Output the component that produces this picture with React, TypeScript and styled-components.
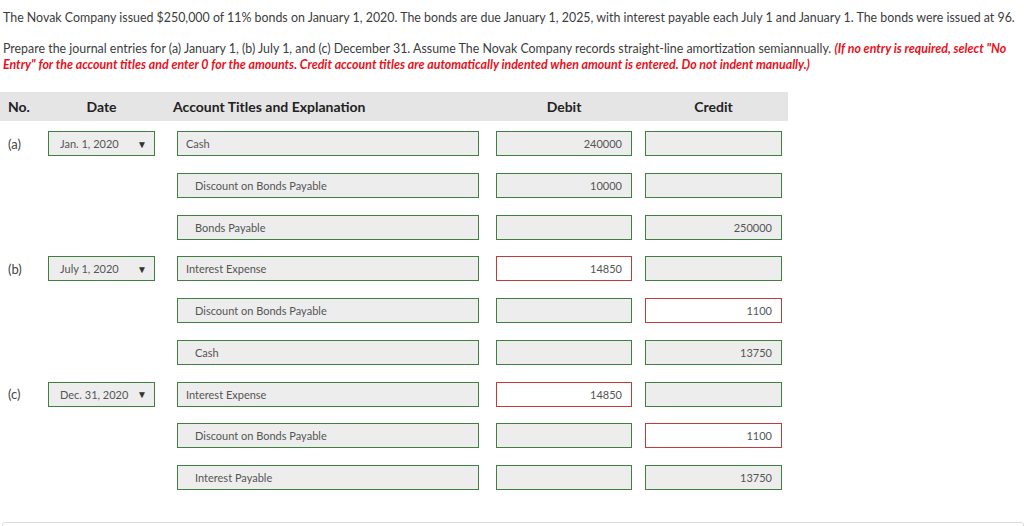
import styled, { createGlobalStyle } from 'styled-components';

const Global = createGlobalStyle`
  body {
    margin: 0;
    background: #fff;
    font-family: Lato, 'Open Sans', sans-serif;
    color: #3a3a3a;
  }
`;

const Page = styled.div`
  width: 1024px;
  height: 526px;
  overflow: hidden;
  padding-top: 10px;
  box-sizing: border-box;
`;

const Texto = styled.p`
  margin: 0 0 15px 3px;
  font-size: 12.4px;
  line-height: 16px;
  color: #3c3c3c;

  em {
    color: #e8111b;
    font-weight: bold;
    font-style: italic;
  }
`;

const Tabela = styled.div`
  width: 788px;
  margin-top: 19px;
`;

const Cabecalho = styled.div`
  display: grid;
  grid-template-columns: 48px 129px 319px 149px 143px;
  height: 29px;
  align-items: center;
  background: #e5e5e5;
  font-size: 14px;
  font-weight: bold;
  color: #222;
`;

const Celula = styled.div<{ $alinhar?: string; $largura?: number; $recuo?: number }>`
  text-align: ${p => p.$alinhar || 'left'};
  width: ${p => (p.$largura ? p.$largura + 'px' : 'auto')};
  padding-left: ${p => (p.$recuo && p.$recuo > 0 ? p.$recuo : 0)}px;
  margin-left: ${p => (p.$recuo && p.$recuo < 0 ? p.$recuo : 0)}px;
  white-space: nowrap;
`;

const Corpo = styled.div`
  display: grid;
  grid-template-columns: 48px 129px 319px 149px 143px;
  grid-auto-rows: 25px;
  row-gap: 16.75px;
  padding-top: 10px;
  align-items: center;
`;

const Letra = styled.div`
  font-size: 13px;
  color: #444;
  padding-left: 8px;
`;

const Vazio = styled.div``;

const Selecao = styled.div`
  width: 107px;
  height: 25px;
  box-sizing: border-box;
  border: 1px solid #3f7f3f;
  background: #ededed;
  display: flex;
  align-items: center;
  justify-content: space-between;
  padding: 0 7px 0 11px;
  font-size: 11px;
  color: #555;

  span.seta {
    font-size: 10px;
    color: #333;
  }
`;

const Campo = styled.div<{ $largura: number; $erro?: boolean; $recuado?: boolean; $numero?: boolean }>`
  width: ${p => p.$largura}px;
  height: 25px;
  box-sizing: border-box;
  border: 1px solid ${p => (p.$erro ? '#c23b3b' : '#3f7f3f')};
  background: ${p => (p.$erro ? '#fff' : '#ededed')};
  display: flex;
  align-items: center;
  justify-content: ${p => (p.$numero ? 'flex-end' : 'flex-start')};
  padding: 0 9px 0 ${p => (p.$recuado ? 17 : 8)}px;
  font-size: 11px;
  color: #555;
`;

const Rodape = styled.div`
  margin: 32px 0 0 2px;
  height: 20px;
  border: 1px solid #dcdcdc;
  border-radius: 3px;
`;

type Linha = {
  letra?: string;
  data?: string;
  conta: string;
  recuado?: boolean;
  debito?: string;
  credito?: string;
  erroDeb?: boolean;
  erroCred?: boolean;
};

const linhas: Linha[] = [
  { letra: '(a)', data: 'Jan. 1, 2020', conta: 'Cash', debito: '240000' },
  { conta: 'Discount on Bonds Payable', recuado: true, debito: '10000' },
  { conta: 'Bonds Payable', recuado: true, credito: '250000' },
  { letra: '(b)', data: 'July 1, 2020', conta: 'Interest Expense', debito: '14850', erroDeb: true },
  { conta: 'Discount on Bonds Payable', recuado: true, credito: '1100', erroCred: true },
  { conta: 'Cash', recuado: true, credito: '13750' },
  { letra: '(c)', data: 'Dec. 31, 2020', conta: 'Interest Expense', debito: '14850', erroDeb: true },
  { conta: 'Discount on Bonds Payable', recuado: true, credito: '1100', erroCred: true },
  { conta: 'Interest Payable', recuado: true, credito: '13750' },
];

const App = () => {
  return (
    <Page>
      <Global />
      <Texto>
        The Novak Company issued $250,000 of 11% bonds on January 1, 2020. The bonds are due January 1, 2025, with interest payable each July 1 and January 1. The bonds were issued at 96.
      </Texto>
      <Texto>
        Prepare the journal entries for (a) January 1, (b) July 1, and (c) December 31. Assume The Novak Company records straight-line amortization semiannually.{' '}
        <em>
          (If no entry is required, select "No Entry" for the account titles and enter 0 for the amounts. Credit account titles are automatically indented when amount is entered. Do not indent manually.)
        </em>
      </Texto>

      <Tabela>
        <Cabecalho>
          <Celula $recuo={8}>No.</Celula>
          <Celula $alinhar="center" $largura={107}>Date</Celula>
          <Celula $recuo={-4}>Account Titles and Explanation</Celula>
          <Celula $alinhar="center" $largura={136}>Debit</Celula>
          <Celula $alinhar="center" $largura={137}>Credit</Celula>
        </Cabecalho>

        <Corpo>
          {linhas.map((l, i) => (
            <>
              {l.letra ? <Letra key={`l${i}`}>{l.letra}</Letra> : <Vazio key={`l${i}`} />}
              {l.data ? (
                <Selecao key={`d${i}`}>
                  <span>{l.data}</span>
                  <span className="seta">▼</span>
                </Selecao>
              ) : (
                <Vazio key={`d${i}`} />
              )}
              <Campo key={`c${i}`} $largura={302} $recuado={l.recuado}>{l.conta}</Campo>
              <Campo key={`b${i}`} $largura={136} $numero $erro={l.erroDeb}>{l.debito}</Campo>
              <Campo key={`r${i}`} $largura={137} $numero $erro={l.erroCred}>{l.credito}</Campo>
            </>
          ))}
        </Corpo>
      </Tabela>
      <Rodape />
    </Page>
  );
};

export default App;
